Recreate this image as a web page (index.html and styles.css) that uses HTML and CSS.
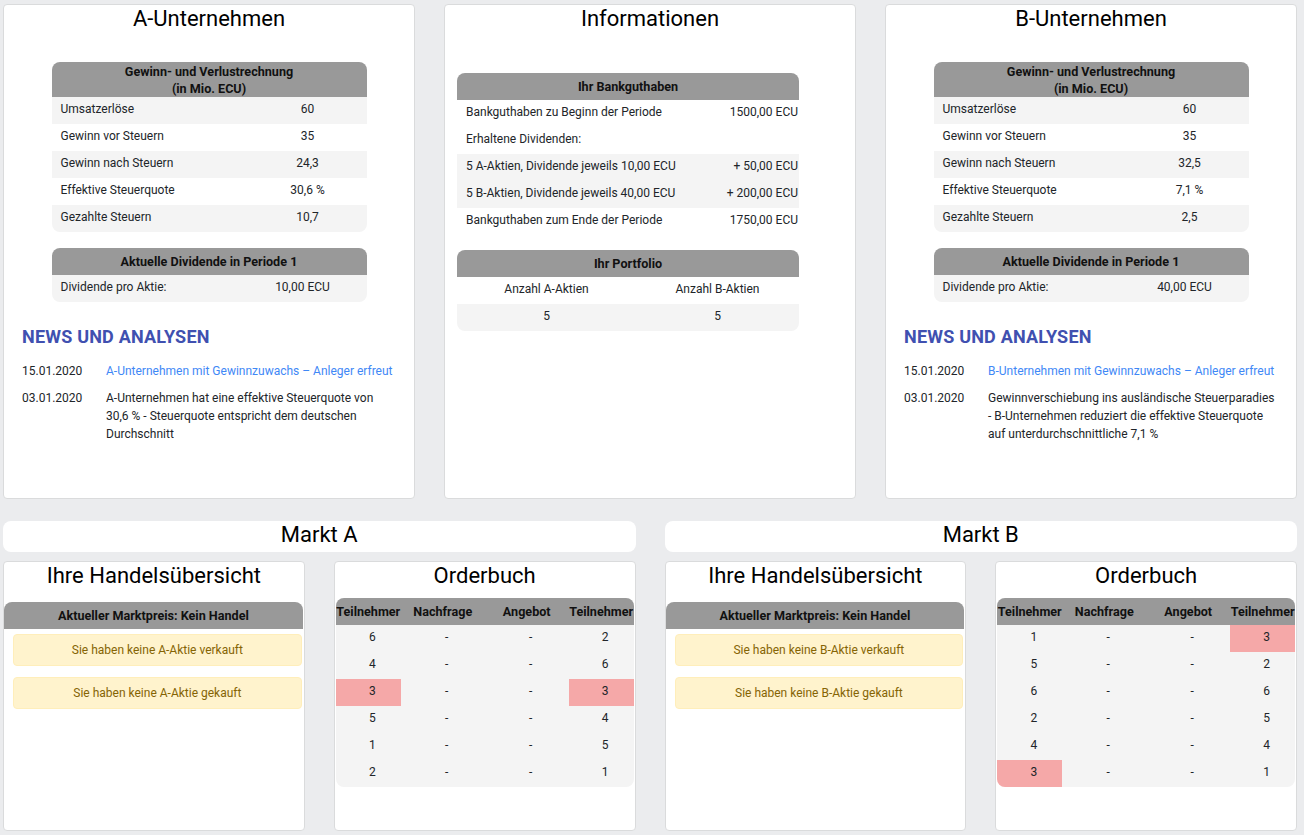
FILE: index.html
```html
<!DOCTYPE html>
<html lang="de">
<head>
<meta charset="utf-8">
<title>Markt</title>
<link rel="stylesheet" href="styles.css">
</head>
<body>
<div class="page">
  <div class="top">
    <section class="card company">
      <h2 class="card-title">A-Unternehmen</h2>
      <div class="tbl guv">
        <div class="tbl-head">Gewinn- und Verlustrechnung<br>(in Mio. ECU)</div>
        <div class="row alt"><span>Umsatzerlöse</span><span class="val">60</span></div>
        <div class="row"><span>Gewinn vor Steuern</span><span class="val">35</span></div>
        <div class="row alt"><span>Gewinn nach Steuern</span><span class="val">24,3</span></div>
        <div class="row"><span>Effektive Steuerquote</span><span class="val">30,6 %</span></div>
        <div class="row alt"><span>Gezahlte Steuern</span><span class="val">10,7</span></div>
      </div>
      <div class="tbl div">
        <div class="tbl-head">Aktuelle Dividende in Periode 1</div>
        <div class="row alt"><span>Dividende pro Aktie:</span><span class="val">10,00 ECU</span></div>
      </div>
      <div class="news">
        <h3>NEWS UND ANALYSEN</h3>
        <div class="news-item"><span>15.01.2020</span><a href="#">A-Unternehmen mit Gewinnzuwachs – Anleger erfreut</a></div>
        <div class="news-item"><span>03.01.2020</span><span>A-Unternehmen hat eine effektive Steuerquote von 30,6 % - Steuerquote entspricht dem deutschen Durchschnitt</span></div>
      </div>
    </section>

    <section class="card info">
      <h2 class="card-title">Informationen</h2>
      <div class="tbl bank">
        <div class="tbl-head">Ihr Bankguthaben</div>
        <div class="row"><span>Bankguthaben zu Beginn der Periode</span><span class="val">1500,00 ECU</span></div>
        <div class="row"><span>Erhaltene Dividenden:</span><span class="val"></span></div>
        <div class="row alt"><span>5 A-Aktien, Dividende jeweils 10,00 ECU</span><span class="val">+ 50,00 ECU</span></div>
        <div class="row alt"><span>5 B-Aktien, Dividende jeweils 40,00 ECU</span><span class="val">+ 200,00 ECU</span></div>
        <div class="row"><span>Bankguthaben zum Ende der Periode</span><span class="val">1750,00 ECU</span></div>
      </div>
      <div class="tbl portfolio">
        <div class="tbl-head">Ihr Portfolio</div>
        <div class="row"><span>Anzahl A-Aktien</span><span>Anzahl B-Aktien</span></div>
        <div class="row alt"><span>5</span><span>5</span></div>
      </div>
    </section>

    <section class="card company">
      <h2 class="card-title">B-Unternehmen</h2>
      <div class="tbl guv">
        <div class="tbl-head">Gewinn- und Verlustrechnung<br>(in Mio. ECU)</div>
        <div class="row alt"><span>Umsatzerlöse</span><span class="val">60</span></div>
        <div class="row"><span>Gewinn vor Steuern</span><span class="val">35</span></div>
        <div class="row alt"><span>Gewinn nach Steuern</span><span class="val">32,5</span></div>
        <div class="row"><span>Effektive Steuerquote</span><span class="val">7,1 %</span></div>
        <div class="row alt"><span>Gezahlte Steuern</span><span class="val">2,5</span></div>
      </div>
      <div class="tbl div">
        <div class="tbl-head">Aktuelle Dividende in Periode 1</div>
        <div class="row alt"><span>Dividende pro Aktie:</span><span class="val">40,00 ECU</span></div>
      </div>
      <div class="news">
        <h3>NEWS UND ANALYSEN</h3>
        <div class="news-item"><span>15.01.2020</span><a href="#">B-Unternehmen mit Gewinnzuwachs – Anleger erfreut</a></div>
        <div class="news-item"><span>03.01.2020</span><span>Gewinnverschiebung ins ausländische Steuerparadies - B-Unternehmen reduziert die effektive Steuerquote auf unterdurchschnittliche 7,1 %</span></div>
      </div>
    </section>
  </div>

  <div class="bottom">
    <div class="market">
      <div class="market-bar">Markt A</div>
      <div class="panels">
        <section class="panel">
          <h2 class="panel-title">Ihre Handelsübersicht</h2>
          <div class="price-head">Aktueller Marktpreis: Kein Handel</div>
          <div class="alert">Sie haben keine A-Aktie verkauft</div>
          <div class="alert">Sie haben keine A-Aktie gekauft</div>
        </section>
        <section class="panel">
          <h2 class="panel-title">Orderbuch</h2>
          <div class="ob">
            <table>
              <colgroup><col class="c-t"><col class="c-m"><col class="c-m"><col></colgroup>
              <thead><tr><th>Teilnehmer</th><th>Nachfrage</th><th>Angebot</th><th>Teilnehmer</th></tr></thead>
              <tbody>
                <tr><td>6</td><td>-</td><td>-</td><td>2</td></tr>
                <tr><td>4</td><td>-</td><td>-</td><td>6</td></tr>
                <tr><td class="me">3</td><td>-</td><td>-</td><td class="me">3</td></tr>
                <tr><td>5</td><td>-</td><td>-</td><td>4</td></tr>
                <tr><td>1</td><td>-</td><td>-</td><td>5</td></tr>
                <tr><td>2</td><td>-</td><td>-</td><td>1</td></tr>
              </tbody>
            </table>
          </div>
        </section>
      </div>
    </div>
    <div class="market">
      <div class="market-bar">Markt B</div>
      <div class="panels">
        <section class="panel">
          <h2 class="panel-title">Ihre Handelsübersicht</h2>
          <div class="price-head">Aktueller Marktpreis: Kein Handel</div>
          <div class="alert">Sie haben keine B-Aktie verkauft</div>
          <div class="alert">Sie haben keine B-Aktie gekauft</div>
        </section>
        <section class="panel">
          <h2 class="panel-title">Orderbuch</h2>
          <div class="ob">
            <table>
              <colgroup><col class="c-t"><col class="c-m"><col class="c-m"><col></colgroup>
              <thead><tr><th>Teilnehmer</th><th>Nachfrage</th><th>Angebot</th><th>Teilnehmer</th></tr></thead>
              <tbody>
                <tr><td>1</td><td>-</td><td>-</td><td class="me">3</td></tr>
                <tr><td>5</td><td>-</td><td>-</td><td>2</td></tr>
                <tr><td>6</td><td>-</td><td>-</td><td>6</td></tr>
                <tr><td>2</td><td>-</td><td>-</td><td>5</td></tr>
                <tr><td>4</td><td>-</td><td>-</td><td>4</td></tr>
                <tr><td class="me">3</td><td>-</td><td>-</td><td>1</td></tr>
              </tbody>
            </table>
          </div>
        </section>
      </div>
    </div>
  </div>
</div>
</body>
</html>
```
FILE: styles.css
```css
html, body {
  margin: 0;
  background: #ebecee;
}
body {
  font-family: Roboto, "Segoe UI", sans-serif;
  font-size: 12px;
  color: #212529;
}
.page {
  width: 1294px;
  padding: 4px 0 0 3px;
}
.top {
  display: grid;
  grid-template-columns: repeat(3, 412px);
  column-gap: 29px;
}
.card {
  height: 495px;
  box-sizing: border-box;
  background: #fff;
  border: 1px solid #dadbdc;
  border-radius: 4px;
}
.card-title,
.panel-title {
  margin: 0;
  font-size: 22px;
  font-weight: 400;
  line-height: 28px;
  text-align: center;
  color: #000;
}
.tbl {
  border-radius: 8px;
  overflow: hidden;
}
.tbl-head {
  background: #999;
  color: #111;
  font-size: 12.6px;
  font-weight: 700;
  text-align: center;
  line-height: 27px;
}
.row {
  display: grid;
  grid-template-columns: 197px 1fr;
  align-items: center;
  height: 27px;
  box-sizing: border-box;
  padding-bottom: 4px;
}
.row > span:first-child {
  padding-left: 9px;
}
.row .val {
  text-align: center;
}
.row.alt {
  background: #f4f4f4;
}
.guv {
  width: 315px;
  margin: 29px auto 0;
}
.guv .tbl-head {
  line-height: 17px;
  padding-top: 1px;
}
.div {
  width: 315px;
  margin: 16px auto 0;
}
.div .row {
  grid-template-columns: 187px 1fr;
}
.news {
  margin-top: 23px;
  padding: 0 18px;
}
.news h3 {
  margin: 0 0 13px;
  font-size: 18px;
  line-height: 24px;
  font-weight: 700;
  color: #4050b0;
  letter-spacing: 0.2px;
}
.news-item {
  display: grid;
  grid-template-columns: 84px 1fr;
  line-height: 18px;
  margin-bottom: 9px;
}
.news a {
  color: #3f88f6;
  text-decoration: none;
}
.bank {
  width: 342px;
  margin: 40px 0 0 12px;
}
.bank .row {
  grid-template-columns: 1fr auto;
}
.bank .row .val {
  text-align: right;
  padding-right: 1px;
}
.portfolio {
  width: 342px;
  margin: 15px 0 0 12px;
}
.portfolio .row {
  grid-template-columns: 1fr 1fr;
}
.portfolio .row > span {
  padding-left: 8px;
  text-align: center;
}
.bottom {
  display: grid;
  grid-template-columns: 1fr 1fr;
  column-gap: 29px;
  margin-top: 22px;
}
.market-bar {
  height: 31px;
  box-sizing: border-box;
  padding-bottom: 3px;
  line-height: 28px;
  background: #fff;
  border-radius: 8px;
  text-align: center;
  font-size: 22px;
  color: #000;
}
.panels {
  display: grid;
  grid-template-columns: 1fr 1fr;
  column-gap: 29px;
  margin-top: 9px;
}
.panel {
  height: 270px;
  box-sizing: border-box;
  background: #fff;
  border: 1px solid #dadbdc;
  border-radius: 4px;
}
.price-head {
  margin: 12px 1px 0 0;
  height: 27px;
  line-height: 27px;
  background: #999;
  border-radius: 8px 8px 0 0;
  color: #111;
  font-size: 12.6px;
  font-weight: 700;
  text-align: center;
}
.alert {
  margin: 5px 2px 0 9px;
  height: 32px;
  box-sizing: border-box;
  line-height: 30px;
  background: #fff3cd;
  border: 1px solid #ffeeba;
  border-radius: 4px;
  color: #856404;
  text-align: center;
}
.alert + .alert {
  margin-top: 11px;
}
.ob {
  margin: 8px 1px 0;
  border-radius: 8px;
  overflow: hidden;
  background: #f4f4f4;
}
.ob table {
  width: 100%;
  border-collapse: collapse;
  border-spacing: 0;
  table-layout: fixed;
}
.c-t {
  width: 65px;
}
.c-m {
  width: 84px;
}
.ob th {
  height: 27px;
  padding: 0;
  background: #999;
  color: #111;
  font-size: 12.6px;
  font-weight: 700;
  text-align: center;
  white-space: nowrap;
}
.ob td {
  height: 27px;
  box-sizing: border-box;
  padding: 0 0 4px 8px;
  text-align: center;
}
.ob td.me {
  background: #f5a8a8;
}
```
